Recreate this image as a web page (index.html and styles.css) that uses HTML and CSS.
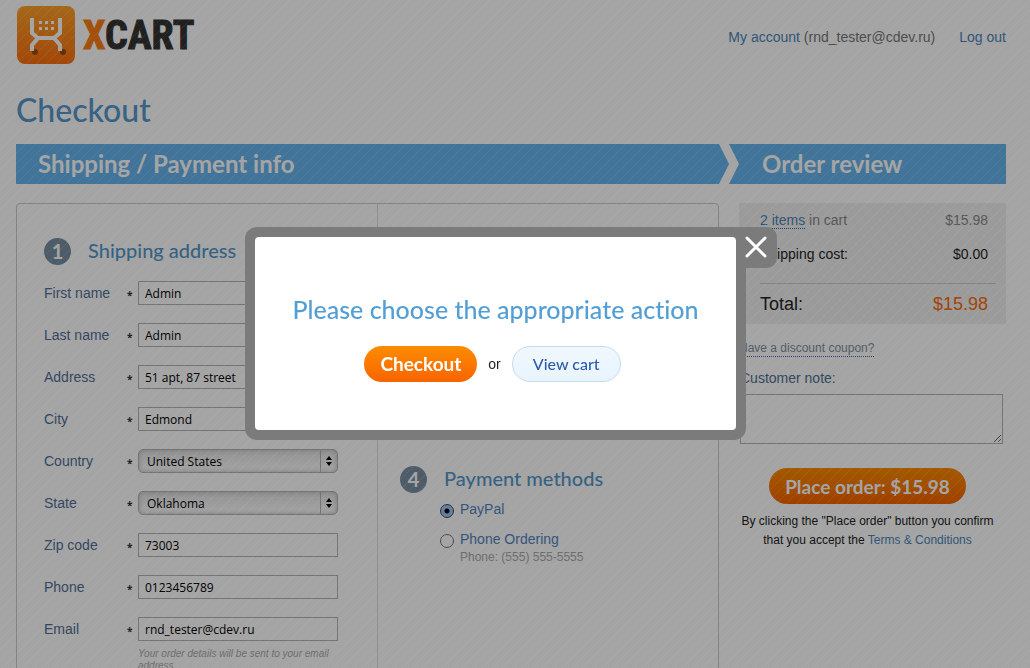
FILE: index.html
```html
<!DOCTYPE html>
<html lang="en">

<head>
  <meta charset="UTF-8">
  <meta name="viewport" content="width=device-width, initial-scale=1.0">
  <title>Checkout</title>
  <link rel="stylesheet" href="styles.css">
</head>

<body>
  <div class="page">
    <header class="header">
      <a href="#" class="logo">
        <svg width="58" height="58" viewBox="0 0 58 58" aria-hidden="true">
          <defs>
            <linearGradient id="logo-bg" x1="0" y1="0" x2="0" y2="1">
              <stop offset="0" stop-color="#ffa228" />
              <stop offset="1" stop-color="#fc7010" />
            </linearGradient>
          </defs>
          <rect width="58" height="58" rx="8" fill="url(#logo-bg)" />
          <circle cx="18" cy="46" r="3" fill="#a04800" />
          <circle cx="46" cy="46" r="3" fill="#a04800" />
          <path d="M15 12V27L21 32H37L43 27V12M15 45V39L21 32M43 45V39L37 32" fill="none" stroke="#fff" stroke-width="4" />
          <path d="M22 15h3v3h-3zM28 15h3v3h-3zM34 15h3v3h-3zM22 21h3v3h-3zM28 21h3v3h-3zM34 21h3v3h-3z" fill="#fff" />
        </svg>
        <span class="logo-text"><span class="logo-x">X</span>CART</span>
      </a>
      <nav class="account">
        <span><a href="#">My account</a> (rnd_tester@cdev.ru)</span>
        <a href="#">Log out</a>
      </nav>
    </header>

    <h1>Checkout</h1>

    <div class="steps">
      <h2 class="step step-info">Shipping / Payment info</h2>
      <h2 class="step step-review">Order review</h2>
    </div>

    <div class="content">
      <main class="panel">
        <section class="shipping">
          <h3><span class="number">1</span>Shipping address</h3>
          <form class="fields">
            <div class="field">
              <label for="firstname">First name</label><span class="star">*</span>
              <input type="text" id="firstname" value="Admin">
            </div>
            <div class="field">
              <label for="lastname">Last name</label><span class="star">*</span>
              <input type="text" id="lastname" value="Admin">
            </div>
            <div class="field">
              <label for="address">Address</label><span class="star">*</span>
              <input type="text" id="address" value="51 apt, 87 street">
            </div>
            <div class="field">
              <label for="city">City</label><span class="star">*</span>
              <input type="text" id="city" value="Edmond">
            </div>
            <div class="field">
              <label for="country">Country</label><span class="star">*</span>
              <div class="select">
                <select id="country">
                  <option>United States</option>
                </select>
                <svg width="6" height="10" viewBox="0 0 6 10" aria-hidden="true"><path d="M3 0L6 4H0zM3 10L0 6H6z" /></svg>
              </div>
            </div>
            <div class="field">
              <label for="state">State</label><span class="star">*</span>
              <div class="select">
                <select id="state">
                  <option>Oklahoma</option>
                </select>
                <svg width="6" height="10" viewBox="0 0 6 10" aria-hidden="true"><path d="M3 0L6 4H0zM3 10L0 6H6z" /></svg>
              </div>
            </div>
            <div class="field">
              <label for="zip">Zip code</label><span class="star">*</span>
              <input type="text" id="zip" value="73003">
            </div>
            <div class="field">
              <label for="phone">Phone</label><span class="star">*</span>
              <input type="text" id="phone" value="0123456789">
            </div>
            <div class="field">
              <label for="email">Email</label><span class="star">*</span>
              <input type="text" id="email" value="rnd_tester@cdev.ru">
              <p class="hint">Your order details will be sent to your email address</p>
            </div>
          </form>
        </section>

        <section class="payment">
          <h3><span class="number">4</span>Payment methods</h3>
          <div class="method">
            <input type="radio" name="payment" id="paypal" checked>
            <label for="paypal">PayPal</label>
          </div>
          <div class="method">
            <input type="radio" name="payment" id="phone-order">
            <label for="phone-order">Phone Ordering</label>
            <p>Phone: (555) 555-5555</p>
          </div>
        </section>
      </main>

      <aside class="review">
        <div class="totals">
          <div class="row items"><span><a href="#">2 <span class="dotted">items</span></a> in cart</span><span>$15.98</span></div>
          <div class="row"><span>Shipping cost:</span><span>$0.00</span></div>
          <div class="row total"><span>Total:</span><span class="sum">$15.98</span></div>
        </div>
        <a href="#" class="coupon dotted">Have a discount coupon?</a>
        <label for="note" class="note-label">Customer note:</label>
        <textarea id="note"></textarea>
        <div class="place">
          <button type="button" class="btn-orange">Place order: $15.98</button>
          <p class="terms">By clicking the "Place order" button you confirm that you accept the <a href="#">Terms &amp; Conditions</a></p>
        </div>
      </aside>
    </div>
  </div>

  <div class="overlay">
    <div class="popup" role="dialog" aria-labelledby="popup-title">
      <button type="button" class="close" aria-label="Close">
        <svg width="22" height="22" viewBox="0 0 22 22"><path d="M2 2L20 20M20 2L2 20" stroke="#fff" stroke-width="3" stroke-linecap="round" /></svg>
      </button>
      <h2 id="popup-title">Please choose the appropriate action</h2>
      <div class="actions">
        <button type="button" class="btn-orange">Checkout</button>
        <span>or</span>
        <button type="button" class="btn-light">View cart</button>
      </div>
    </div>
  </div>
</body>

</html>
```
FILE: styles.css
```css
* {
  box-sizing: border-box;
}

html,
body {
  height: 100%;
  overflow: hidden;
}

body {
  margin: 0;
  background: #fff;
  color: #222;
  font-family: "Liberation Sans", sans-serif;
  font-size: 14px;
}

h1,
h2,
h3,
p {
  margin: 0;
  font-weight: normal;
}

h1,
h2,
h3,
.number,
.btn-orange,
.btn-light {
  font-family: "Trebuchet MS", Lato, sans-serif;
  font-variant-ligatures: none;
}

a {
  color: #4a86b8;
  text-decoration: none;
}

.page {
  height: 100%;
  overflow: hidden;
  padding: 6px 24px 0 16px;
}

/* header */
.header {
  display: flex;
  justify-content: space-between;
  height: 82px;
}

.logo {
  display: flex;
  gap: 8px;
  height: 58px;
  align-items: center;
  padding-left: 1px;
}

.logo-text {
  color: #333;
  font-family: Impact, "Liberation Sans Narrow", "Roboto Condensed", sans-serif;
  font-size: 40px;
  font-weight: bold;
  -webkit-text-stroke: 1px;
}

.logo-x {
  color: #fb7e14;
}

.account {
  display: flex;
  gap: 24px;
  line-height: 16px;
  padding-top: 23px;
  color: #777;
}

h1 {
  color: #5498cc;
  font-size: 32px;
  font-weight: 500;
  line-height: 44px;
}

/* steps */
.steps {
  display: grid;
  grid-template-columns: 1fr 277px;
  margin-top: 12px;
}

.step {
  height: 40px;
  background: #67b4ee;
  color: #fff;
  font-size: 24px;
  font-weight: bold;
  line-height: 40px;
}

.step-info {
  padding-left: 22px;
  clip-path: polygon(0 0, calc(100% - 10px) 0, 100% 50%, calc(100% - 10px) 100%, 0 100%);
}

.step-review {
  padding-left: 33px;
  clip-path: polygon(0 0, 100% 0, 100% 100%, 0 100%, 10px 50%);
}

.content {
  display: grid;
  grid-template-columns: 1fr 267px;
  gap: 20px;
  margin-top: 19px;
}

.panel {
  display: grid;
  grid-template-columns: 361px 1fr;
  border: 1px solid #ccc;
  border-radius: 4px;
}

h3 {
  display: flex;
  gap: 17px;
  color: #5498cc;
  font-size: 20px;
  font-weight: 500;
  line-height: 24px;
}

.number {
  width: 27px;
  height: 27px;
  border-radius: 50%;
  background: #7990a2;
  color: #fff;
  font-weight: bold;
  line-height: 27px;
  text-align: center;
}

.shipping {
  padding: 34px 0 40px 27px;
  border-right: 1px solid #ddd;
}

.fields {
  display: grid;
  gap: 18px;
  margin-top: 16px;
}

.field {
  display: grid;
  grid-template-columns: 83px 11px 200px;
  line-height: 24px;
}

.field label {
  color: #506f96;
}

.star {
  height: 24px;
  color: #333;
  font-family: "Open Sans", sans-serif;
  font-size: 10px;
  font-weight: bold;
  line-height: 28px;
}

.field input,
.field select {
  width: 100%;
  height: 24px;
  padding: 0 6px;
  border: 1px solid #b4b4b4;
  border-radius: 0;
  background: #fff;
  color: #000;
  font-family: "Lucida Grande", "Open Sans", sans-serif;
  font-size: 12px;
}

.select {
  position: relative;
}

.field select {
  display: block;
  padding: 0 8px;
  border-radius: 5px;
  background: linear-gradient(#e4e4e4, #fff);
  box-shadow: inset 0 0 5px #bbb;
  appearance: none;
}

.select svg {
  position: absolute;
  top: 1px;
  right: 1px;
  width: 17px;
  height: 22px;
  padding: 6px 5px;
  border-left: 1px solid #b4b4b4;
}

.hint {
  grid-column: 3;
  margin-top: 7px;
  color: #aaa;
  font-size: 10px;
  font-style: italic;
  line-height: 12px;
}

.payment {
  padding: 262px 0 0 22px;
}

.method {
  display: grid;
  grid-template-columns: 14px 1fr;
  column-gap: 6px;
  margin: 6px 0 0 40px;
  line-height: 20px;
}

.method + .method {
  margin-top: 10px;
}

.method label {
  color: #5084bc;
}

.method input {
  width: 14px;
  height: 14px;
  margin: 5px 0 0;
  border: 1px solid #777;
  border-radius: 50%;
  background: #fff;
  appearance: none;
}

.method input:checked {
  border-color: #446;
  background: radial-gradient(circle, #000 2px, #9cc8f4 3px);
}

.method p {
  grid-column: 2;
  color: #aaa;
  font-size: 12px;
  line-height: 16px;
}

/* order review */
.totals {
  padding: 0 10px 0 21px;
  background: #f2f2f2;
}

.row {
  display: flex;
  justify-content: space-between;
  padding-right: 8px;
  line-height: 34px;
}

.items {
  color: #888;
}

.dotted {
  border-bottom: 1px dotted #33639c;
}

.total {
  margin-top: 12px;
  border-top: 1px solid #ccc;
  font-size: 18px;
  line-height: 40px;
}

.sum {
  color: #fb6a08;
}

.coupon {
  display: inline-block;
  margin-top: 16px;
  color: #8090a0;
  font-size: 12px;
  line-height: 16px;
}

.note-label {
  display: block;
  margin: 11px 0 6px 1px;
  color: #506f96;
  line-height: 20px;
}

.review textarea {
  display: block;
  width: 263px;
  height: 50px;
  margin-left: 1px;
  border: 1px solid #b4b4b4;
  background: #fff;
}

.btn-orange {
  height: 36px;
  padding: 0 16px;
  border: 0;
  border-radius: 18px;
  background: linear-gradient(#fc8c00, #f86400);
  color: #fff;
  font-size: 19px;
  font-weight: bold;
}

.place {
  padding: 24px 10px 0 0;
  text-align: center;
}

.terms {
  margin-top: 8px;
  font-size: 12px;
  line-height: 19px;
}

/* popup */
.overlay {
  position: fixed;
  inset: 0;
  display: flex;
  align-items: center;
  justify-content: center;
  padding: 0 39px 2px 0;
  background-color: rgba(0, 0, 0, .355);
  background-image: linear-gradient(135deg, transparent 45%, rgba(255, 255, 255, .07) 46% 54%, transparent 55%);
  background-size: 10px 10px;
}

.popup {
  position: relative;
  width: 481px;
  padding: 54px 0 48px;
  border-radius: 4px;
  background: #fff;
  box-shadow: 0 0 0 10px #7b7b7b;
  text-align: center;
}

.popup h2 {
  color: #549ed6;
  font-size: 25px;
  font-weight: 500;
  line-height: 36px;
}

.close {
  position: absolute;
  top: -10px;
  left: 100%;
  width: 41px;
  height: 41px;
  padding: 0;
  border: 0;
  border-radius: 0 10px 10px 0;
  background: #7b7b7b;
}

.close svg {
  display: block;
  margin-left: 9px;
}

.actions {
  display: flex;
  align-items: center;
  justify-content: center;
  gap: 11px;
  margin-top: 19px;
  padding-right: 6px;
}

.btn-light {
  height: 36px;
  padding: 0 20px;
  border: 1px solid #c4dcec;
  border-radius: 18px;
  background: linear-gradient(#f0f8fe, #e8f4fd);
  color: #2c5caa;
  font-size: 16px;
  font-weight: 500;
}
```
